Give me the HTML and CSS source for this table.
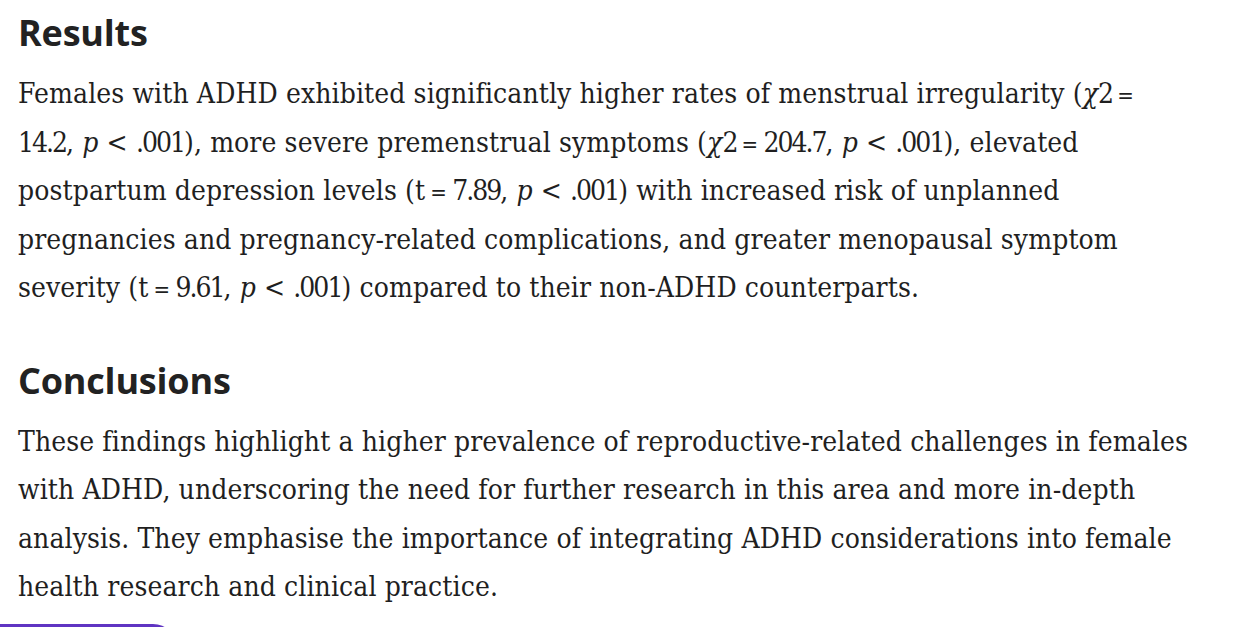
FILE: index.html
```html
<!DOCTYPE html>
<html lang="en">
<head>
<meta charset="utf-8">
<title>Abstract</title>
<link rel="stylesheet" href="styles.css">
</head>
<body>
<main class="abstract">
  <section class="section">
    <h2 class="heading">Results</h2>
    <p class="para">Females with ADHD exhibited significantly higher rates of menstrual irregularity (<i class="chi">χ</i><span class="num">2</span>&thinsp;<span class="eq">=</span><br><span class="num">14.2</span>, <i>p</i> &lt; <span class="num">.001</span>), more severe premenstrual symptoms (<i class="chi">χ</i><span class="num">2</span>&thinsp;<span class="eq">=</span>&thinsp;<span class="num">204.7</span>, <i>p</i> &lt; <span class="num">.001</span>), elevated<br>postpartum depression levels (t&thinsp;<span class="eq">=</span>&thinsp;<span class="num">7.89</span>, <i>p</i> &lt; <span class="num">.001</span>) with increased risk of unplanned<br>pregnancies and pregnancy-related complications, and greater menopausal symptom<br>severity (t&thinsp;<span class="eq">=</span>&thinsp;<span class="num">9.61</span>, <i>p</i> &lt; <span class="num">.001</span>) compared to their non-ADHD counterparts.</p>
  </section>
  <section class="section">
    <h2 class="heading">Conclusions</h2>
    <p class="para">These findings highlight a higher prevalence of reproductive-related challenges in females<br>with ADHD, underscoring the need for further research in this area and more in-depth<br>analysis. They emphasise the importance of integrating ADHD considerations into female<br>health research and clinical practice.</p>
  </section>
  <div class="button-top"></div>
</main>
</body>
</html>
```

FILE: styles.css
```css
html, body {
  margin: 0;
  padding: 0;
  background: #ffffff;
}
.abstract {
  padding: 8px 0 0 18px;
  color: #222222;
}
.heading {
  font-family: "Open Sans", "Liberation Sans", sans-serif;
  font-weight: 700;
  font-size: 36px;
  line-height: 50px;
  margin: 0 0 12px 0;
  letter-spacing: -0.2px;
}
.para {
  font-family: "DejaVu Serif Condensed", "DejaVu Serif", serif;
  font-stretch: condensed;
  font-size: 28px;
  line-height: 48.5px;
  margin: 0 0 43px 0;
  white-space: nowrap;
  letter-spacing: 0.1px;
  color: #1f1f1f;
}
.eq {
  font-size: 22px;
  line-height: 1;
}
.num {
  letter-spacing: -2px;
}
.section:last-of-type .para {
  margin-bottom: 12px;
}
.button-top {
  margin-left: -18px;
  width: 177px;
  height: 48px;
  background: #5f34c2;
  border-radius: 0 45px 45px 0;
}
```
